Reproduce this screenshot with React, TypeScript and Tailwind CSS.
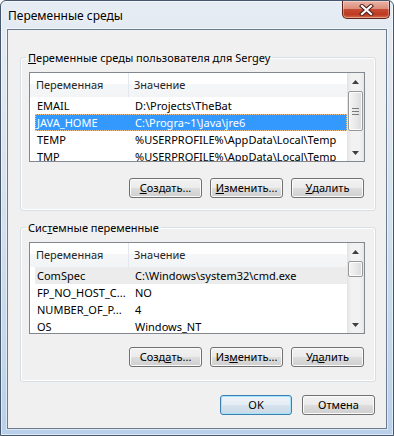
type Row = { name: string; value: string }

const userRows: Row[] = [
  { name: 'EMAIL', value: 'D:\\Projects\\TheBat' },
  { name: 'JAVA_HOME', value: 'C:\\Progra~1\\Java\\jre6' },
  { name: 'TEMP', value: '%USERPROFILE%\\AppData\\Local\\Temp' },
  { name: 'TMP', value: '%USERPROFILE%\\AppData\\Local\\Temp' },
]

const sysRows: Row[] = [
  { name: 'ComSpec', value: 'C:\\Windows\\system32\\cmd.exe' },
  { name: 'FP_NO_HOST_C...', value: 'NO' },
  { name: 'NUMBER_OF_P...', value: '4' },
  { name: 'OS', value: 'Windows_NT' },
]

function Arrow({ down }: { down?: boolean }) {
  return (
    <svg width="7" height="4" viewBox="0 0 7 4">
      {down ? <path d="M0 0h7L3.5 4z" fill="#404040" /> : <path d="M0 4h7L3.5 0z" fill="#404040" />}
    </svg>
  )
}

function ScrollBar({ thumb, grip }: { thumb: string; grip?: boolean }) {
  return (
    <div className="w-[17px] flex flex-col bg-[linear-gradient(to_right,#e3e3e3,#f2f2f2_25%,#f2f2f2_75%,#e6e6e6)]">
      <div className="h-[17px] flex items-center justify-center">
        <Arrow />
      </div>
      <div
        className={`mt-[1px] mx-[1px] rounded-[2px] border border-[#979797] shadow-[inset_0_0_0_1px_#fbfbfb] bg-[linear-gradient(to_right,#f4f4f4,#e9e9e9_50%,#d9d9d9)] flex flex-col items-center justify-center gap-[2px] ${thumb}`}
      >
        {grip && (
          <>
            <div className="w-[7px] h-[1px] bg-[#7a7a7a]" />
            <div className="w-[7px] h-[1px] bg-[#7a7a7a]" />
            <div className="w-[7px] h-[1px] bg-[#7a7a7a]" />
          </>
        )}
      </div>
      <div className="flex-1" />
      <div className="h-[17px] flex items-center justify-center">
        <Arrow down />
      </div>
    </div>
  )
}

function VarList({ rows, sel, focused, height, thumb, grip }: {
  rows: Row[]
  sel: number
  focused: boolean
  height: string
  thumb: string
  grip?: boolean
}) {
  return (
    <div className={`flex border border-[#828790] bg-white overflow-hidden ${height}`}>
      <div className="flex-1 flex flex-col overflow-hidden">
        <div className="h-[24px] flex shrink-0 text-[#262626] bg-[linear-gradient(to_bottom,#ffffff_0%,#ffffff_45%,#f5f6f7_46%,#f3f4f6_100%)]">
          <div className="w-[99px] pl-[6px] flex items-center border-r border-[#e3e8ee]">Переменная</div>
          <div className="flex-1 pl-[5px] flex items-center">Значение</div>
        </div>
        {rows.map((r, i) => {
          const active = i === sel
          const cls = active
            ? focused
              ? 'bg-[#3399ff] text-white border border-dotted border-[#f5c48c]'
              : 'bg-[#ececec] text-black border border-transparent'
            : 'text-black border border-transparent'
          return (
            <div key={r.name} className={`ml-[5px] h-[17px] shrink-0 flex items-center whitespace-nowrap leading-[13px] ${cls}`}>
              <div className="w-[99px] pl-[1px]">{r.name}</div>
              <div className="flex-1">{r.value}</div>
            </div>
          )
        })}
      </div>
      <ScrollBar thumb={thumb} grip={grip} />
    </div>
  )
}

function Btn({ children, primary }: { children: React.ReactNode; primary?: boolean }) {
  return (
    <div
      className={
        primary
          ? 'w-[72px] h-[20px] flex items-center justify-center rounded-[3px] border border-[#3c7fb1] shadow-[inset_0_0_0_1px_#a6e3fb] bg-[linear-gradient(to_bottom,#eef4f9_0%,#e4edf4_50%,#d6e3ed_51%,#c9d9e6_100%)] text-black'
          : 'w-[73px] h-[20px] flex items-center justify-center rounded-[3px] border border-[#707070] shadow-[inset_0_0_0_1px_#fbfbfb] bg-[linear-gradient(to_bottom,#f2f2f2_0%,#ebebeb_50%,#dddddd_51%,#cfcfcf_100%)] text-black'
      }
    >
      {children}
    </div>
  )
}

function Group({ label, children }: { label: React.ReactNode; children: React.ReactNode }) {
  return (
    <fieldset className="ml-[12px] mr-[10px] border border-[#d5dfe5] rounded-[3px] shadow-[inset_0_0_0_1px_#ffffff] pl-[8px] pr-[10px]">
      <legend className="-ml-[3px] px-[2px] leading-[15px] text-black">{label}</legend>
      {children}
    </fieldset>
  )
}

export default function App() {
  return (
    <div className="w-[394px] h-[436px] flex flex-col font-['Noto_Sans',sans-serif] text-[11px] border border-[#46566c] rounded-t-[6px] bg-[linear-gradient(to_bottom,#e6ecf3_0%,#dae4ef_35%,#c9daed_70%,#b9d0ea_100%)] px-[6px] pb-[6px] shadow-[inset_0_0_0_1px_rgba(255,255,255,0.55)]">
      {/* title bar */}
      <div className="h-[28px] flex items-start justify-between -mx-[6px]">
        <div className="pl-[7px] pt-[7px] text-[12px] leading-[15px] text-black [text-shadow:0_0_6px_#ffffff]">
          Переменные среды
        </div>
        <div className="mr-[3px] w-[48px] h-[18px] flex items-center justify-center rounded-b-[5px] border border-t-0 border-[#5e2219] shadow-[inset_0_0_0_1px_rgba(255,255,255,0.35)] bg-[linear-gradient(to_bottom,#eab3a6_0%,#dc8e7c_45%,#c64a33_50%,#bd3a20_80%,#d8704f_100%)]">
          <svg width="15" height="12" viewBox="0 0 15 12">
            <path d="M3 2l9 8M12 2l-9 8" stroke="#4a1e18" strokeWidth="4.2" strokeLinecap="square" />
            <path d="M3 2l9 8M12 2l-9 8" stroke="#ffffff" strokeWidth="2.2" strokeLinecap="square" />
          </svg>
        </div>
      </div>

      {/* client area */}
      <div className="flex-1 flex flex-col bg-[#f0f0f0] border border-[#6b7b90] shadow-[0_0_0_1px_rgba(255,255,255,0.5)]">
        <div className="mt-[20px]">
          <Group label={<><u>П</u>еременные среды пользователя для Sergey</>}>
            <div className="pt-[7px]">
              <VarList rows={userRows} sel={1} focused height="h-[90px]" thumb="h-[40px]" grip />
            </div>
            <div className="mt-[16px] mb-[12px] flex justify-end gap-[8px] mr-[1px]">
              <Btn><u>С</u>оздать...</Btn>
              <Btn><u>И</u>зменить...</Btn>
              <Btn><u>У</u>далить</Btn>
            </div>
          </Group>
        </div>

        <div className="mt-[9px]">
          <Group label={<>Сис<u>т</u>емные переменные</>}>
            <div className="pt-[7px]">
              <VarList rows={sysRows} sel={0} focused={false} height="h-[92px]" thumb="h-[16px]" />
            </div>
            <div className="mt-[13px] mb-[14px] flex justify-end gap-[8px] mr-[1px]">
              <Btn>Созд<u>а</u>ть...</Btn>
              <Btn>Из<u>м</u>енить...</Btn>
              <Btn>Уд<u>а</u>лить</Btn>
            </div>
          </Group>
        </div>

        <div className="mt-[13px] mr-[11px] flex justify-end gap-[10px]">
          <Btn primary>OK</Btn>
          <Btn>Отмена</Btn>
        </div>
      </div>
    </div>
  )
}
